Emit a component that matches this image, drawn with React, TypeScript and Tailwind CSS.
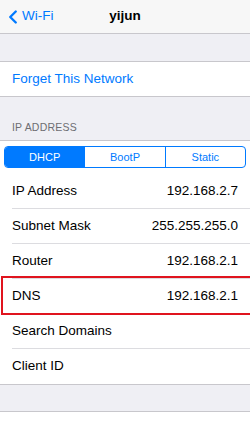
import { ChevronLeft } from "lucide-react";

const ROWS = [
  { label: "IP Address", value: "192.168.2.7" },
  { label: "Subnet Mask", value: "255.255.255.0" },
  { label: "Router", value: "192.168.2.1" },
  { label: "DNS", value: "192.168.2.1", marked: true },
  { label: "Search Domains", value: "" },
  { label: "Client ID", value: "" },
];

const MODES = ["DHCP", "BootP", "Static"];

export default function App() {
  return (
    <div
      className="w-[250px] h-[428px] overflow-hidden bg-[#efeff4] text-black"
      style={{ fontFamily: '"Liberation Sans", Arial, sans-serif' }}
    >
      {/* nav bar */}
      <div className="relative flex h-[34px] items-center bg-[#f7f7f7] border-b border-[#c8c7cc]">
        <div className="flex items-center text-[#007aff] pl-[2px]">
          <ChevronLeft className="h-[22px] w-[22px]" strokeWidth={2.6} />
          <span className="text-[13.5px] ml-[-2px]">Wi-Fi</span>
        </div>
        <span className="absolute left-1/2 -translate-x-1/2 text-[13.5px] font-bold">yijun</span>
      </div>

      <div className="h-[27px]" />

      <div className="bg-white border-y border-[#c8c7cc] h-[36px] flex items-center px-3">
        <span className="text-[13.5px] text-[#007aff]">Forget This Network</span>
      </div>

      {/* section header */}
      <div className="h-[43px] flex items-end px-3 pb-[4px]">
        <span className="text-[10.5px] text-[#6d6d72] tracking-[0.2px]">IP ADDRESS</span>
      </div>

      <div className="bg-white border-t border-[#c8c7cc]">
        <div className="px-[4px] pt-[5px] pb-[6px]">
          <div className="flex h-[22px] rounded-[4px] border border-[#007aff] overflow-hidden text-[11px]">
            {MODES.map((m, i) => (
              <div
                key={m}
                className={
                  i === 0
                    ? "flex-1 flex items-center justify-center bg-[#007aff] text-white"
                    : "flex-1 flex items-center justify-center text-[#007aff] border-l border-[#007aff]"
                }
              >
                {m}
              </div>
            ))}
          </div>
        </div>

        {ROWS.map((row, i) => (
          <div key={row.label} className="relative pl-3">
            <div
              className={
                i === ROWS.length - 1
                  ? "flex h-[35px] items-center justify-between pr-3"
                  : "flex h-[35px] items-center justify-between pr-3 border-b border-[#dcdce0]"
              }
            >
              <span className="text-[13.5px]">{row.label}</span>
              <span className="text-[13.5px]">{row.value}</span>
            </div>
            {row.marked && (
              <div className="absolute left-[1px] right-0 top-[-3px] bottom-[-1px] border-2 border-r-0 border-[#e0141e]" />
            )}
          </div>
        ))}
      </div>

      <div className="h-[27px] border-t border-[#c8c7cc]" />

      <div className="bg-white border-t border-[#c8c7cc] h-[40px] px-3 pt-[10px]">
        <span className="text-[13.5px] text-[#007aff]">Renew Lease</span>
      </div>
    </div>
  );
}
